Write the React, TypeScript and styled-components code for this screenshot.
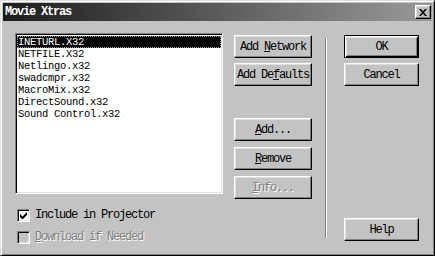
import React from "react";
import styled, { createGlobalStyle, css } from "styled-components";

const Global = createGlobalStyle`
  html, body { margin: 0; padding: 0; background: #c3c3c3; }
  body {
    width: 435px; height: 256px; overflow: hidden;
    font-family: "Liberation Mono", "Noto Sans CJK SC", monospace;
    font-size: 12px;
  }
`;

const Window = styled.div`
  width: 435px;
  height: 256px;
  box-sizing: border-box;
  background: #c3c3c3;
  border: 1px solid;
  border-color: #dfdfdf #000 #000 #dfdfdf;
  box-shadow: inset 1px 1px #fff, inset -1px -1px #808080;
  padding: 2px;
  display: flex;
  flex-direction: column;
`;

const TitleBar = styled.div`
  height: 18px;
  flex: none;
  display: flex;
  align-items: center;
  padding: 0 1px 0 2px;
  background: linear-gradient(to right, #1c1c1c, #9a9a9a);
`;

const TitleText = styled.span`
  color: #fff;
  font-weight: bold;
  letter-spacing: -1.2px;
  line-height: 18px;
`;

const CloseBtn = styled.div`
  margin-left: auto;
  width: 16px;
  height: 14px;
  box-sizing: border-box;
  background: #c0c0c0;
  border: 1px solid;
  border-color: #fff #000 #000 #fff;
  box-shadow: inset -1px -1px #808080, inset 1px 1px #dfdfdf;
  display: flex;
  align-items: center;
  justify-content: center;
`;

const Body = styled.div`
  flex: 1;
  display: flex;
  padding: 12px 0 0 12px;
`;

const LeftCol = styled.div`
  width: 208px;
  display: flex;
  flex-direction: column;
`;

const ListBox = styled.div`
  width: 208px;
  height: 161px;
  box-sizing: border-box;
  background: #fff;
  border: 1px solid;
  border-color: #808080 #fff #fff #808080;
  box-shadow: inset 1px 1px #000, inset -1px -1px #dfdfdf;
  padding: 2px 1px;
`;

const Row = styled.div<{ $selected?: boolean }>`
  height: 12px;
  line-height: 12px;
  font-size: 10.5px;
  padding-left: 1px;
  white-space: pre;
  letter-spacing: -0.3px;
  color: #000;
  ${(p) =>
    p.$selected &&
    css`
      background: #000;
      color: #fff;
      outline: 1px dotted #9a9a9a;
      outline-offset: -1px;
    `}
`;

const Checks = styled.div`
  margin-top: 15px;
  padding-left: 2px;
  display: flex;
  flex-direction: column;
  gap: 9px;
`;

const CheckRow = styled.div`
  display: flex;
  align-items: center;
  gap: 5px;
  height: 13px;
`;

const Box = styled.div<{ $disabled?: boolean }>`
  width: 13px;
  height: 13px;
  box-sizing: border-box;
  background: ${(p) => (p.$disabled ? "#c3c3c3" : "#fff")};
  border: 1px solid;
  border-color: #808080 #fff #fff #808080;
  box-shadow: inset 1px 1px #000, inset -1px -1px #dfdfdf;
  display: flex;
  align-items: center;
  justify-content: center;
`;

const Label = styled.span<{ $disabled?: boolean }>`
  letter-spacing: -1.2px;
  line-height: 13px;
  color: ${(p) => (p.$disabled ? "#808080" : "#000")};
  text-shadow: ${(p) => (p.$disabled ? "1px 1px #fff" : "none")};
`;

const U = styled.span`
  text-decoration: underline;
  text-underline-offset: 1px;
`;

const MidCol = styled.div`
  width: 78px;
  margin-left: 11px;
  padding-top: 2px;
  display: flex;
  flex-direction: column;
`;

const BtnGroup = styled.div<{ $top?: number; $gap: number }>`
  display: flex;
  flex-direction: column;
  gap: ${(p) => p.$gap}px;
  margin-top: ${(p) => p.$top ?? 0}px;
`;

const Button = styled.div<{ $default?: boolean; $disabled?: boolean }>`
  height: 23px;
  box-sizing: border-box;
  background: #c3c3c3;
  border: 1px solid;
  border-color: #fff #000 #000 #fff;
  box-shadow: inset -1px -1px #808080, inset 1px 1px #dfdfdf;
  display: flex;
  align-items: center;
  justify-content: center;
  letter-spacing: -1.2px;
  white-space: pre;
  color: ${(p) => (p.$disabled ? "#808080" : "#000")};
  text-shadow: ${(p) => (p.$disabled ? "1px 1px #fff" : "none")};
  ${(p) =>
    p.$default &&
    css`
      border-color: #000;
      box-shadow: inset 1px 1px #fff, inset -1px -1px #000,
        inset 2px 2px #dfdfdf, inset -2px -2px #808080;
    `}
`;

const Separator = styled.div`
  width: 0;
  height: 200px;
  margin: 5px 0 0 13px;
  border-left: 1px solid #808080;
  border-right: 1px solid #fff;
`;

const RightCol = styled.div`
  width: 75px;
  margin-left: 17px;
  padding: 2px 0 12px;
  display: flex;
  flex-direction: column;
  gap: 5px;
`;

const HelpWrap = styled.div`
  margin-top: auto;
`;

const items = [
  "INETURL.X32",
  "NETFILE.X32",
  "Netlingo.x32",
  "swadcmpr.x32",
  "MacroMix.x32",
  "DirectSound.x32",
  "Sound Control.x32",
];

export default function App() {
  return (
    <>
      <Global />
      <Window>
        <TitleBar>
          <TitleText>Movie Xtras</TitleText>
          <CloseBtn>
            <svg width="8" height="7" viewBox="0 0 8 7">
              <path d="M0 0h2l2 2.2L6 0h2L5 3.5 8 7H6L4 4.8 2 7H0l3-3.5z" fill="#000" />
            </svg>
          </CloseBtn>
        </TitleBar>
        <Body>
          <LeftCol>
            <ListBox>
              {items.map((t, i) => (
                <Row key={t} $selected={i === 0}>
                  {t}
                </Row>
              ))}
            </ListBox>
            <Checks>
              <CheckRow>
                <Box>
                  <svg width="7" height="7" viewBox="0 0 7 7">
                    <path d="M0 2v3l2 2h1l4-4V0L2.5 4.5z" fill="#000" />
                  </svg>
                </Box>
                <Label>Include in Projector</Label>
              </CheckRow>
              <CheckRow>
                <Box $disabled />
                <Label $disabled>
                  <U>D</U>ownload if Needed
                </Label>
              </CheckRow>
            </Checks>
          </LeftCol>
          <MidCol>
            <BtnGroup $gap={5}>
              <Button>
                Add <U>N</U>etwork
              </Button>
              <Button>
                Add De<U>f</U>aults
              </Button>
            </BtnGroup>
            <BtnGroup $gap={6} $top={32}>
              <Button>
                <U>A</U>dd...
              </Button>
              <Button>
                <U>R</U>emove
              </Button>
              <Button $disabled>
                <U>I</U>nfo...
              </Button>
            </BtnGroup>
          </MidCol>
          <Separator />
          <RightCol>
            <Button $default>OK</Button>
            <Button>Cancel</Button>
            <HelpWrap>
              <Button>Help</Button>
            </HelpWrap>
          </RightCol>
        </Body>
      </Window>
    </>
  );
}
